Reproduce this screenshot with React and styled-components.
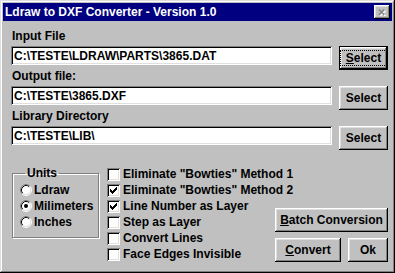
import React from 'react'
import styled, { createGlobalStyle, css } from 'styled-components'

const GlobalStyle = createGlobalStyle`
  body {
    margin: 0;
    background: #c0c0c0;
    font-family: "Liberation Sans", Arial, sans-serif;
  }
`

const raised = css`
  box-shadow: inset -1px -1px #000, inset 1px 1px #fff,
    inset -2px -2px #808080, inset 2px 2px #dfdfdf;
`

const sunken = css`
  box-shadow: inset 1px 1px #808080, inset -1px -1px #fff,
    inset 2px 2px #000, inset -2px -2px #dfdfdf;
`

const Window = styled.div`
  width: 395px;
  height: 273px;
  box-sizing: border-box;
  padding: 3px;
  background: #c0c0c0;
  display: flex;
  flex-direction: column;
  box-shadow: inset -1px -1px #000, inset 1px 1px #dfdfdf,
    inset -2px -2px #808080, inset 2px 2px #fff;
  font-size: 12px;
  font-weight: bold;
  color: #000;
`

const TitleBar = styled.div`
  height: 18px;
  background: #000080;
  color: #fff;
  display: flex;
  align-items: center;
  justify-content: space-between;
  padding: 0 2px 0 2px;
  line-height: 14px;
`

const CloseButton = styled.div`
  width: 16px;
  height: 14px;
  background: #c0c0c0;
  display: flex;
  align-items: center;
  justify-content: center;
  ${raised}
`

const Body = styled.div`
  flex: 1;
  padding: 8px 4px 8px 8px;
  display: flex;
  flex-direction: column;
`

const FileSection = styled.div`
  display: grid;
  grid-template-columns: 1fr 49px;
  grid-template-rows: 14px 23px;
  column-gap: 7px;
  row-gap: 3px;
`

const Label = styled.div`
  grid-column: 1 / 3;
  line-height: 14px;
  margin-left: 1px;
`

const Field = styled.input`
  height: 19px;
  box-sizing: border-box;
  border: none;
  outline: none;
  background: #fff;
  padding: 0 0 0 3px;
  font-family: "Liberation Sans", Arial, sans-serif;
  font-size: 12px;
  font-weight: bold;
  color: #000;
  ${sunken}
`

const Button = styled.button`
  height: ${p => p.$h || 24}px;
  width: ${p => (p.$w ? `${p.$w}px` : 'auto')};
  box-sizing: border-box;
  border: ${p => (p.$default ? '1px solid #000' : 'none')};
  padding: 0;
  background: #c0c0c0;
  font-family: "Liberation Sans", Arial, sans-serif;
  font-size: 12px;
  font-weight: bold;
  color: #000;
  white-space: nowrap;
  display: flex;
  align-items: center;
  justify-content: center;
  ${raised}
  u {
    text-decoration: underline;
  }
`

const Focus = styled.span`
  outline: 1px dotted #000;
  outline-offset: 1px;
  padding: 0 4px;
  line-height: 12px;
`

const Bottom = styled.div`
  margin-top: 17px;
  display: flex;
  align-items: stretch;
  height: 96px;
`

const Group = styled.fieldset`
  margin: 0 0 0 1px;
  width: 87px;
  height: 72px;
  flex-shrink: 0;
  box-sizing: border-box;
  padding: 2px 0 0 7px;
  border: 1px solid #808080;
  box-shadow: inset 1px 1px #fff, 1px 1px #fff;
  align-self: flex-start;
  legend {
    padding: 0 2px;
    margin-left: 5px;
    line-height: 14px;
  }
`

const OptionRow = styled.label`
  display: flex;
  align-items: center;
  height: 16px;
  gap: ${p => p.$gap || 3}px;
  line-height: 14px;
  white-space: nowrap;
`

const CheckList = styled.div`
  margin-left: 8px;
  flex: 1;
  min-width: 0;
  display: flex;
  flex-direction: column;
`

const CheckBox = styled.span`
  width: 13px;
  height: 13px;
  flex-shrink: 0;
  background: #fff;
  display: flex;
  align-items: center;
  justify-content: center;
  ${sunken}
`

const ButtonColumn = styled.div`
  width: 113px;
  flex-shrink: 0;
  display: flex;
  flex-direction: column;
  justify-content: flex-end;
  gap: 6px;
`

const ButtonRow = styled.div`
  display: flex;
  gap: 7px;
`

function Radio({ checked }) {
  return (
    <svg width="12" height="12" viewBox="0 0 12 12">
      <circle cx="6" cy="6" r="5" fill="#fff" />
      <path d="M2.11 9.89 A5.5 5.5 0 0 1 9.89 2.11" fill="none" stroke="#808080" />
      <path d="M9.89 2.11 A5.5 5.5 0 0 1 2.11 9.89" fill="none" stroke="#fff" />
      <path d="M2.82 9.18 A4.5 4.5 0 0 1 9.18 2.82" fill="none" stroke="#000" />
      <path d="M9.18 2.82 A4.5 4.5 0 0 1 2.82 9.18" fill="none" stroke="#dfdfdf" />
      {checked && <circle cx="6" cy="6" r="2" fill="#000" />}
    </svg>
  )
}

function Check({ checked }) {
  return (
    <CheckBox>
      {checked && (
        <svg width="7" height="7" viewBox="0 0 7 7">
          <polygon
            points="0,2 1,2 1,3 2,3 2,4 3,4 3,3 4,3 4,2 5,2 5,1 6,1 6,0 7,0 7,3 6,3 6,4 5,4 5,5 4,5 4,6 3,6 3,7 2,7 2,6 1,6 1,5 0,5"
            fill="#000"
          />
        </svg>
      )}
    </CheckBox>
  )
}

const files = [
  { label: 'Input File', value: 'C:\\TESTE\\LDRAW\\PARTS\\3865.DAT', def: true },
  { label: 'Output file:', value: 'C:\\TESTE\\3865.DXF' },
  { label: 'Library Directory', value: 'C:\\TESTE\\LIB\\' },
]

const units = [
  { label: 'Ldraw' },
  { label: 'Milimeters', checked: true },
  { label: 'Inches' },
]

const options = [
  { label: 'Eliminate "Bowties" Method 1' },
  { label: 'Eliminate "Bowties" Method 2', checked: true },
  { label: 'Line Number as Layer', checked: true },
  { label: 'Step as Layer' },
  { label: 'Convert Lines' },
  { label: 'Face Edges Invisible' },
]

export default function App() {
  return (
    <>
      <GlobalStyle />
      <Window>
        <TitleBar>
          <span>Ldraw to DXF Converter - Version 1.0</span>
          <CloseButton>
            <svg width="8" height="7" viewBox="0 0 9 8">
              <path d="M1.5 1 L7.5 7 M7.5 1 L1.5 7" stroke="#fff" strokeWidth="1.6" transform="translate(1 1)" />
              <path d="M1 0.5 L7 6.5 M7 0.5 L1 6.5" stroke="#808080" strokeWidth="1.6" />
            </svg>
          </CloseButton>
        </TitleBar>
        <Body>
          {files.map(f => (
            <FileSection key={f.label}>
              <Label>{f.label}</Label>
              <Field readOnly defaultValue={f.value} />
              <Button $default={f.def}>
                {f.def ? (
                  <Focus><u>S</u>elect</Focus>
                ) : (
                  'Select'
                )}
              </Button>
            </FileSection>
          ))}
          <Bottom>
            <Group>
              <legend>Units</legend>
              {units.map(u => (
                <OptionRow key={u.label} $gap={2}>
                  <Radio checked={u.checked} />
                  {u.label}
                </OptionRow>
              ))}
            </Group>
            <CheckList>
              {options.map(o => (
                <OptionRow key={o.label}>
                  <Check checked={o.checked} />
                  {o.label}
                </OptionRow>
              ))}
            </CheckList>
            <ButtonColumn>
              <Button><span><u>B</u>atch Conversion</span></Button>
              <ButtonRow>
                <Button $w={66}><span><u>C</u>onvert</span></Button>
                <Button $w={40}>Ok</Button>
              </ButtonRow>
            </ButtonColumn>
          </Bottom>
        </Body>
      </Window>
    </>
  )
}
